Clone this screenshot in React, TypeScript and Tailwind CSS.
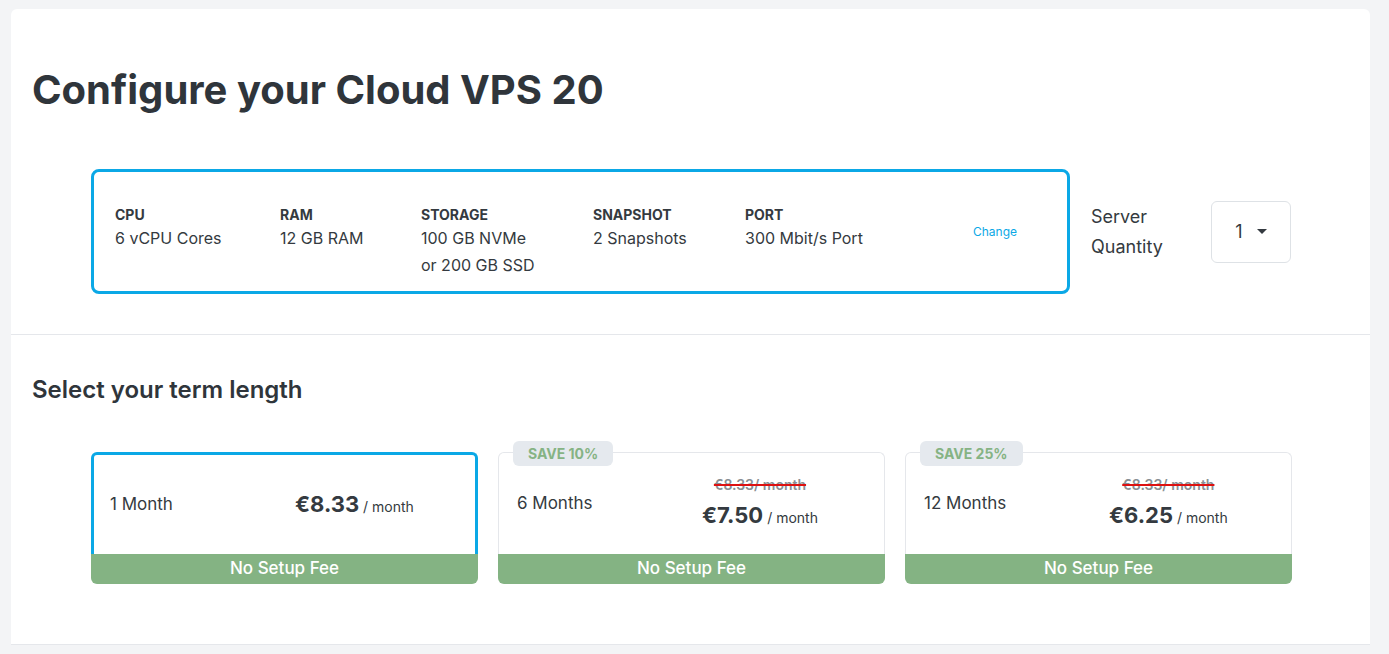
export default function App() {
  const specs = [
    { l: "CPU", v: ["6 vCPU Cores"], w: "w-[165px]" },
    { l: "RAM", v: ["12 GB RAM"], w: "w-[141px]" },
    { l: "STORAGE", v: ["100 GB NVMe", "or 200 GB SSD"], w: "w-[172px]" },
    { l: "SNAPSHOT", v: ["2 Snapshots"], w: "w-[152px]" },
    { l: "PORT", v: ["300 Mbit/s Port"], w: "w-[200px]" },
  ];
  const terms = [
    { name: "1 Month", price: "€8.33", sel: true },
    { name: "6 Months", price: "€7.50", save: "SAVE 10%" },
    { name: "12 Months", price: "€6.25", save: "SAVE 25%" },
  ];
  return (
    <div className="min-h-[654px] bg-[#f3f4f6] pt-[9px] pl-[11px] pr-[19px] text-[#343a40]" style={{ fontFamily: "Inter, 'Noto Sans', sans-serif" }}>
      <div className="bg-white rounded-t-md">
        <div className="px-[21px] pt-[64px] pb-[40px] border-b border-[#e5e7eb]">
          <h1 className="text-[40px] font-bold leading-[34px] text-[#2f353b]">Configure your Cloud VPS 20</h1>
          <div className="flex items-center mt-[62px] pl-[59px]">
            <div className="w-[979px] h-[125px] border-[3px] border-[#0ba8e6] rounded-lg flex items-center pl-[21px]">
              {specs.map((s) => (
                <div key={s.l} className={`${s.w} self-start pt-[34px]`}>
                  <div className="text-[14px] font-bold leading-[18px]">{s.l}</div>
                  {s.v.map((t) => (
                    <div key={t} className="text-[16px] leading-[26px] mt-[1px]">{t}</div>
                  ))}
                </div>
              ))}
              <div className="text-[12px] text-[#0ba8e6] ml-[28px]">Change</div>
            </div>
            <div className="ml-[21px] text-[18px] leading-[30px] w-[120px]">Server<br />Quantity</div>
            <div className="ml-[0px] w-[80px] h-[62px] border border-[#dee2e6] rounded-md flex items-center justify-center gap-[14px] text-[18px]">
              <span>1</span>
              <svg width="10" height="6" viewBox="0 0 10 6"><path d="M0 0h10L5 5z" fill="#343a40" /></svg>
            </div>
          </div>
        </div>
        <div className="px-[21px] pt-[40px] pb-[60px] border-b border-[#e5e7eb]">
          <h2 className="text-[24px] font-semibold leading-[30px] text-[#2f353b]">Select your term length</h2>
          <div className="flex gap-[20px] mt-[47px] pl-[59px]">
            {terms.map((t) => (
              <div key={t.name} className="relative w-[387px]">
                {t.save && (
                  <div className="absolute -top-[11px] left-[15px] bg-[#e5e9ee] text-[#85b384] font-bold text-[14px] px-[15px] h-[25px] leading-[25px] rounded-md">{t.save}</div>
                )}
                <div className={`h-[102px] flex items-center rounded-t-md ${t.sel ? "border-[3px] border-b-0 border-[#0ba8e6] pl-[16px]" : "border border-b-0 border-[#e5e7eb] pl-[18px]"}`}>
                  <div className="w-[185px] text-[17px]">{t.name}</div>
                  {t.sel ? (
                    <div><span className="text-[22px] font-bold">{t.price}</span><span className="text-[14px]"> / month</span></div>
                  ) : (
                    <div className="flex flex-col items-center pb-[2px]">
                      <div className="text-[14px] font-semibold text-[#8a8f94] line-through decoration-[#d11] decoration-2">€8.33/ month</div>
                      <div className="mt-[4px]"><span className="text-[22px] font-bold">{t.price}</span><span className="text-[14px]"> / month</span></div>
                    </div>
                  )}
                </div>
                <div className="h-[30px] bg-[#84b383] rounded-b-md text-white text-[17px] font-medium flex items-center justify-center">No Setup Fee</div>
              </div>
            ))}
          </div>
        </div>
      </div>
    </div>
  );
}
